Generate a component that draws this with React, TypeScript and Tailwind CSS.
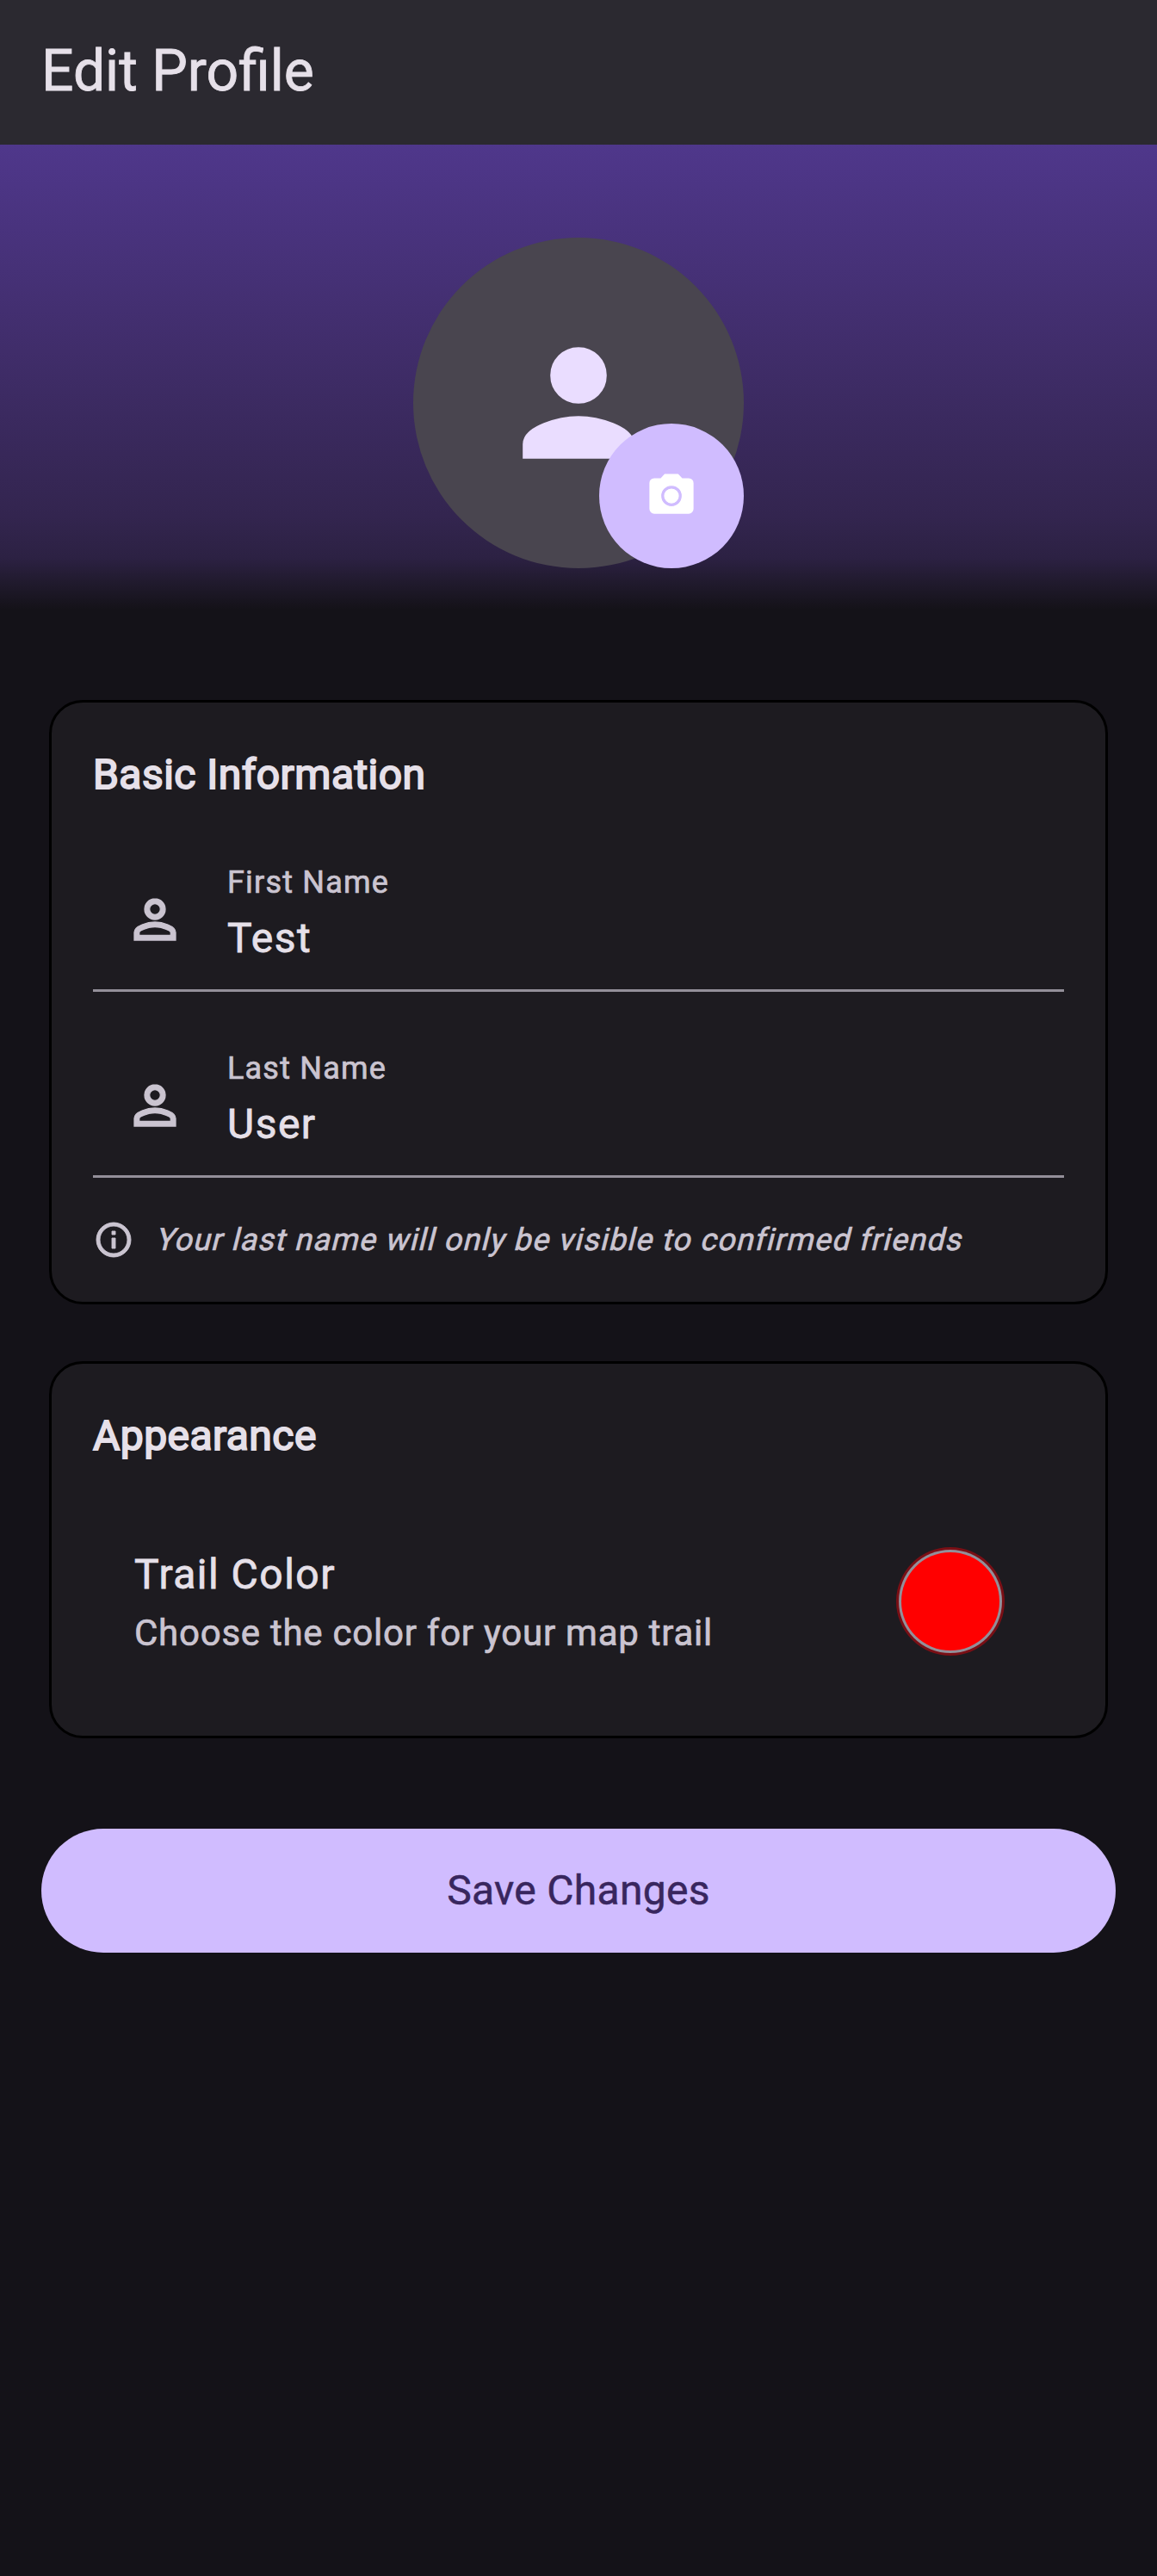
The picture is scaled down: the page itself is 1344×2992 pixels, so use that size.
import type { ReactNode } from "react";

function PersonIcon({ className }: { className: string }) {
  return (
    <svg viewBox="0 0 24 24" className={className} fill="currentColor" stroke="currentColor" strokeWidth="0.2">
      <path d="M12 12c2.21 0 4-1.79 4-4s-1.79-4-4-4-4 1.79-4 4 1.79 4 4 4zm0 2c-2.67 0-8 1.34-8 4v2h16v-2c0-2.66-5.33-4-8-4z" />
    </svg>
  );
}

function PersonOutlineIcon({ className }: { className: string }) {
  return (
    <svg viewBox="0 0 24 24" className={className} fill="currentColor" stroke="currentColor" strokeWidth="0.42">
      <path d="M12 5.9a2.1 2.1 0 1 1 0 4.2 2.1 2.1 0 0 1 0-4.2m0 9c2.97 0 6.1 1.46 6.1 2.1v1.1H5.9V17c0-.64 3.13-2.1 6.1-2.1M12 4C9.79 4 8 5.79 8 8s1.79 4 4 4 4-1.79 4-4-1.79-4-4-4zm0 9c-2.67 0-8 1.34-8 4v3h16v-3c0-2.66-5.33-4-8-4z" />
    </svg>
  );
}

function CameraIcon({ className }: { className: string }) {
  return (
    <svg viewBox="0 0 24 24" className={className} fill="currentColor" stroke="currentColor" strokeWidth="0.5">
      <path
        fillRule="evenodd"
        d="M9 2 7.17 4H4c-1.1 0-2 .9-2 2v12c0 1.1.9 2 2 2h16c1.1 0 2-.9 2-2V6c0-1.1-.9-2-2-2h-3.17L15 2H9zm3 5a5 5 0 1 1 0 10 5 5 0 0 1 0-10z"
      />
      <circle cx="12" cy="12" r="3.2" />
    </svg>
  );
}

function InfoIcon({ className }: { className: string }) {
  return (
    <svg viewBox="0 0 24 24" className={className} fill="currentColor" stroke="currentColor" strokeWidth="0.45">
      <path d="M11 7h2v2h-2zm0 4h2v6h-2zm1-9C6.48 2 2 6.48 2 12s4.48 10 10 10 10-4.48 10-10S17.52 2 12 2zm0 18c-4.41 0-8-3.59-8-8s3.59-8 8-8 8 3.59 8 8-3.59 8-8 8z" />
    </svg>
  );
}

function Card({ title, children }: { title: string; children: ReactNode }) {
  return (
    <section className="rounded-[39px] border-[3px] border-black bg-[#1d1b20] p-12">
      <h2 className="mb-12 text-[48px] leading-[72px] tracking-[0.45px] [-webkit-text-stroke:1.9px_currentColor]">
        {title}
      </h2>
      {children}
    </section>
  );
}

function Field({ label, value }: { label: string; value: string }) {
  return (
    <div className="mb-12 flex h-[168px] border-b-[3px] border-[#938f99] pl-9 text-[#cac4d0]">
      <PersonOutlineIcon className="mt-12 size-[72px] shrink-0" />
      <div className="ml-12 pt-[17px]">
        <div className="text-[36px] leading-[48px] tracking-[1.2px] [-webkit-text-stroke:0.7px_currentColor]">{label}</div>
        <div className="mt-[5px] text-[48px] leading-[72px] tracking-[1.5px] text-[#e6e0e9] [-webkit-text-stroke:0.8px_currentColor]">
          {value}
        </div>
      </div>
    </div>
  );
}

export default function App() {
  return (
    <div className="min-h-[2992px] w-full bg-[#141218] font-[Roboto,sans-serif] font-normal text-[#e6e0e9]">
      <header className="h-[168px] bg-[#2b2930] px-12 pt-[41px]">
        <h1 className="text-[66px] leading-[84px] [-webkit-text-stroke:0.8px_currentColor]">Edit Profile</h1>
      </header>

      <div className="flex h-[540px] justify-center bg-[linear-gradient(180deg,#4f378b_0px,#402d6a_240px,#33254f_432px,#2c2143_480px,#221b30_505px,#141218_540px)] pt-[108px]">
        <div className="relative flex size-[384px] items-center justify-center rounded-full bg-[#49454f]">
          <PersonIcon className="size-[192px] text-[#eaddff]" />
          <button className="absolute right-0 bottom-0 flex size-[168px] items-center justify-center rounded-full bg-[#d0bcff] text-white">
            <CameraIcon className="size-[60px]" />
          </button>
        </div>
      </div>

      <main className="px-[57px] pt-[105px]">
        <Card title="Basic Information">
          <Field label="First Name" value="Test" />
          <Field label="Last Name" value="User" />
          <div className="flex items-center gap-6 text-[#cac4d0]">
            <InfoIcon className="size-12 shrink-0" />
            <p className="origin-[0_36px] -skew-x-[14deg] text-[36px] leading-[48px] tracking-[1.2px] whitespace-nowrap [-webkit-text-stroke:0.7px_currentColor]">
              Your last name will only be visible to confirmed friends
            </p>
          </div>
        </Card>

        <div className="h-[66px]" />

        <Card title="Appearance">
          <div className="flex h-[216px] items-center justify-between pr-[69px] pl-12">
            <div>
              <div className="text-[48px] leading-[72px] tracking-[1.5px] [-webkit-text-stroke:0.8px_currentColor]">Trail Color</div>
              <div className="mt-[2px] text-[42px] leading-[60px] tracking-[0.75px] text-[#cac4d0] [-webkit-text-stroke:0.7px_currentColor]">
                Choose the color for your map trail
              </div>
            </div>
            <div className="size-[126px] rounded-full bg-[#7a0f15] p-[3px]">
              <div className="size-[120px] rounded-full bg-[#938f99] p-[3px]">
                <div className="size-[114px] rounded-full bg-[#ff0000]" />
              </div>
            </div>
          </div>
        </Card>

        <button className="mx-[-9px] mt-[105px] flex h-[144px] w-[1248px] items-center justify-center rounded-full bg-[#d0bcff] text-[48px] leading-[72px] tracking-[0.3px] text-[#38265e] [-webkit-text-stroke:0.5px_currentColor]">
          Save Changes
        </button>
      </main>
    </div>
  );
}
